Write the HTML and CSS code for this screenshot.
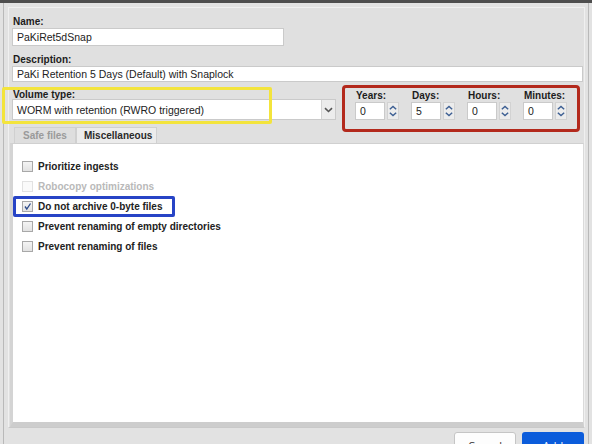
FILE: index.html
```html
<!DOCTYPE html>
<html>
<head>
<meta charset="utf-8">
<link rel="stylesheet" href="styles.css">
</head>
<body>
<div class="topbar"></div>
<div class="window">
  <div class="content">
    <div class="field">
      <div class="label">Name:</div>
      <div class="input name-input">PaKiRet5dSnap</div>
    </div>
    <div class="field desc-field">
      <div class="label">Description:</div>
      <div class="input desc-input">PaKi Retention 5 Days (Default) with Snaplock</div>
    </div>
    <div class="row">
      <div class="volume">
        <div class="label vol-label">Volume type:</div>
        <div class="select">
          <span class="select-text">WORM with retention (RWRO triggered)</span>
          <span class="select-btn">
            <svg width="9" height="6" viewBox="0 0 9 6"><path d="M1 1.2 L4.5 4.5 L8 1.2" fill="none" stroke="#555" stroke-width="1.6"/></svg>
          </span>
        </div>
        <div class="mark mark-yellow"></div>
      </div>
      <div class="times">
        <div class="time">
          <div class="label tlabel">Years:</div>
          <div class="spin"><div class="spin-input">0</div><div class="spin-btns"><svg width="11" height="16" viewBox="0 0 11 16"><path d="M2 6 L5.5 3 L9 6" fill="none" stroke="#3d5f93" stroke-width="1.6"/><path d="M2 10 L5.5 13 L9 10" fill="none" stroke="#3d5f93" stroke-width="1.6"/></svg></div></div>
        </div>
        <div class="time">
          <div class="label tlabel">Days:</div>
          <div class="spin"><div class="spin-input">5</div><div class="spin-btns"><svg width="11" height="16" viewBox="0 0 11 16"><path d="M2 6 L5.5 3 L9 6" fill="none" stroke="#3d5f93" stroke-width="1.6"/><path d="M2 10 L5.5 13 L9 10" fill="none" stroke="#3d5f93" stroke-width="1.6"/></svg></div></div>
        </div>
        <div class="time">
          <div class="label tlabel">Hours:</div>
          <div class="spin"><div class="spin-input">0</div><div class="spin-btns"><svg width="11" height="16" viewBox="0 0 11 16"><path d="M2 6 L5.5 3 L9 6" fill="none" stroke="#3d5f93" stroke-width="1.6"/><path d="M2 10 L5.5 13 L9 10" fill="none" stroke="#3d5f93" stroke-width="1.6"/></svg></div></div>
        </div>
        <div class="time">
          <div class="label tlabel">Minutes:</div>
          <div class="spin"><div class="spin-input">0</div><div class="spin-btns"><svg width="11" height="16" viewBox="0 0 11 16"><path d="M2 6 L5.5 3 L9 6" fill="none" stroke="#3d5f93" stroke-width="1.6"/><path d="M2 10 L5.5 13 L9 10" fill="none" stroke="#3d5f93" stroke-width="1.6"/></svg></div></div>
        </div>
        <div class="mark mark-red"></div>
      </div>
    </div>
    <div class="tabs">
      <div class="tab safe">Safe files</div>
      <div class="tab active">Miscellaneous</div>
    </div>
    <div class="panel">
      <div class="check"><span class="box"></span><span>Prioritize ingests</span></div>
      <div class="check disabled"><span class="box"></span><span>Robocopy optimizations</span></div>
      <div class="check checked"><span class="box"><svg width="9" height="9" viewBox="0 0 9 9"><path d="M2 4.5 L3.8 7 L7.5 1.5" fill="none" stroke="#2c4a8a" stroke-width="1.3"/></svg></span><span>Do not archive 0-byte files</span><div class="mark mark-blue"></div></div>
      <div class="check"><span class="box"></span><span>Prevent renaming of empty directories</span></div>
      <div class="check"><span class="box"></span><span>Prevent renaming of files</span></div>
    </div>
  </div>
  <div class="buttons">
    <div class="btn cancel">Cancel</div>
    <div class="btn add">Add</div>
  </div>
</div>
</body>
</html>
```
FILE: styles.css
```css
* { box-sizing: border-box; }
html, body { margin: 0; padding: 0; }
body {
  width: 592px;
  height: 444px;
  overflow: hidden;
  background: #e2e2e2;
  font-family: "Liberation Sans", Arial, sans-serif;
  font-size: 10px;
  color: #222;
}
.topbar { height: 3px; background: #4e4e4e; }
.window {
  margin: 0 3px;
  height: 441px;
  border-left: 1px solid #b9b9b9;
  border-right: 1px solid #b9b9b9;
  padding: 4px 3px 0 4px;
  display: flex;
  flex-direction: column;
}
.window > * { flex-shrink: 0; }
.content {
  border: 1px solid #f0f0f0;
  border-bottom: 1px solid #c9c9c9;
  background: #e0e0e0;
  padding: 8px 0 0 3px;
  height: 421px;
  display: flex;
  flex-direction: column;
}
.content > * { flex-shrink: 0; }
.label { font-weight: bold; line-height: 12px; padding-left: 1px; color: #1c1c1c; white-space: nowrap; }
.input {
  background: #fff;
  border: 1px solid #cacaca;
  line-height: 16px;
  padding-left: 4px;
  color: #222;
  white-space: nowrap;
  font-size: 10.5px;
}
.name-input { width: 272px; height: 18px; }
.desc-field { margin-top: 8px; }
.desc-input { width: 571px; height: 16px; line-height: 14px; }
.row { display: flex; margin-top: 8px; }
.volume { position: relative; width: 324px; }
.vol-label { line-height: 9px; }
.select {
  height: 21px;
  background: #fff;
  border: 1px solid #cacaca;
  display: flex;
  align-items: center;
}
.select-text { flex: 1; padding-left: 4px; font-size: 10.5px; white-space: nowrap; }
.select-btn {
  width: 14px; height: 19px;
  background: #ececec;
  border-left: 1px solid #d4d4d4;
  display: flex; align-items: center; justify-content: center;
}
.times { position: relative; display: flex; margin-left: 19px; gap: 12px; }
.time { display: flex; flex-direction: column; width: 44px; }
.tlabel { line-height: 11px; padding-left: 1px; }
.spin { display: flex; gap: 2px; margin-top: 1px; }
.spin-input {
  width: 30px; height: 18px;
  background: #fff; border: 1px solid #cacaca;
  padding-left: 4px; line-height: 16px;
  font-size: 10.5px;
}
.spin-btns {
  width: 12px; height: 18px;
  background: #ececec;
  border: 1px solid #d2d2d2;
  display: flex; align-items: center; justify-content: center;
}
.mark { position: absolute; pointer-events: none; }
.mark-yellow { left: -10px; top: -3px; width: 270px; height: 37px; border: 3px solid #f3e43c; border-radius: 2px; }
.mark-red { left: -13px; top: -5px; width: 238px; height: 47px; border: 3px solid #b3291c; border-radius: 4px; }
.mark-blue { left: -9px; top: 0; width: 162px; height: 21px; border: 3px solid #2744c6; border-radius: 2px; }
.tabs { display: flex; margin-top: 7px; padding-left: 2px; height: 16px; }
.tab {
  line-height: 15px;
  font-weight: bold;
  white-space: nowrap;
  color: #9a9a9a;
  background: #dedede;
  border: 1px solid #d0d0d0;
  border-bottom: none;
}
.tab.safe { width: 62px; padding-left: 8px; }
.tab.active { color: #2a2a2a; background: #ececec; width: 81px; padding-left: 7px; }
.panel {
  margin-left: -2px;
  width: 574px;
  flex: 1 1 auto;
  background: #fff;
  border-left: 3px solid #d4d4d4;
  border-top: 1px solid #d0d0d0;
  border-right: 1px solid #dadada;
  border-bottom: 5px solid #cdcdcd;
  padding: 12px 0 0 9px;
}
.check { position: relative; display: flex; align-items: center; height: 20px; font-weight: bold; color: #222; }
.check.disabled { color: #b9b9b9; }
.check.disabled .box { border-color: #e2e2e2; background: #fafafa; }
.box {
  width: 11px; height: 11px;
  border: 1px solid #a8a8a8;
  background: linear-gradient(#f4f4f4, #e2e2e2);
  margin-right: 5px;
  display: flex; align-items: center; justify-content: center;
}
.buttons { display: flex; justify-content: flex-end; gap: 6px; margin-top: 4px; padding-right: 1px; }
.btn {
  width: 62px; height: 28px;
  border-radius: 3px;
  text-align: center;
  line-height: 28px;
  font-size: 11px;
  font-family: "Open Sans", "Liberation Sans", sans-serif;
}
.cancel { background: #fdfdfd; border: 1px solid #c5c5c5; color: #333; line-height: 26px; }
.add { background: #0b5cdb; color: #fff; }
```
